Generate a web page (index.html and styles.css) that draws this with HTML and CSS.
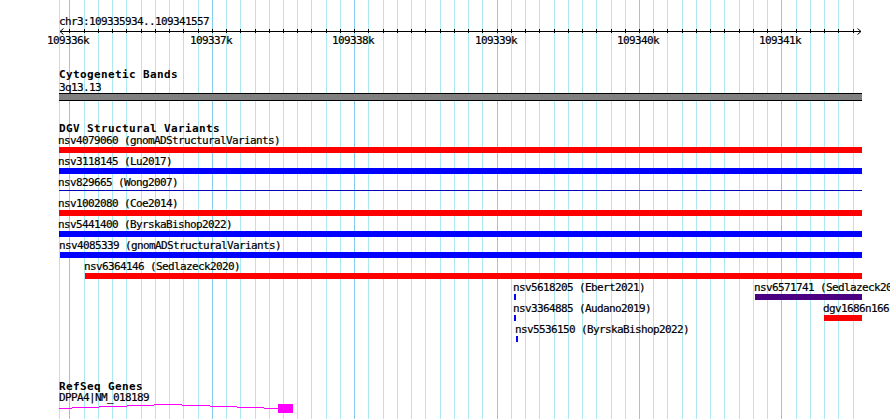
FILE: index.html
```html
<!DOCTYPE html>
<html lang="en">
<head>
    <meta charset="UTF-8">
    <title>chr3:109335934..109341557</title>
    <link rel="stylesheet" href="styles.css">
</head>
<body>
    <div class="browser">
        <div class="grid" id="grid"></div>

        <div class="ruler">
            <div class="ruler-title">chr3:109335934..109341557</div>
            <svg class="axis" id="axis" width="804" height="7">
                <line x1="1" y1="4.5" x2="802" y2="4.5" />
                <polyline points="4.5,1.5 1,4.5 4.5,7.5" />
                <polyline points="798.5,1.5 802,4.5 798.5,7.5" />
            </svg>
            <div class="axis-labels" id="axis-labels"></div>
        </div>

        <section class="track">
            <h2 class="track-title">Cytogenetic Bands</h2>
            <div class="track-label">3q13.13</div>
            <div class="band"></div>
        </section>

        <section class="track">
            <h2 class="track-title">DGV Structural Variants</h2>
            <div class="rows">
                <div class="row">
                    <div class="feature" style="left:0;width:803px">
                        <span class="label">nsv4079060 (gnomADStructuralVariants)</span>
                        <span class="bar red"></span>
                    </div>
                </div>
                <div class="row">
                    <div class="feature" style="left:0;width:803px">
                        <span class="label">nsv3118145 (Lu2017)</span>
                        <span class="bar blue"></span>
                    </div>
                </div>
                <div class="row">
                    <div class="feature" style="left:0;width:803px">
                        <span class="label">nsv829665 (Wong2007)</span>
                        <span class="bar thin"></span>
                    </div>
                </div>
                <div class="row">
                    <div class="feature" style="left:0;width:803px">
                        <span class="label">nsv1002080 (Coe2014)</span>
                        <span class="bar red"></span>
                    </div>
                </div>
                <div class="row">
                    <div class="feature" style="left:0;width:803px">
                        <span class="label">nsv5441400 (ByrskaBishop2022)</span>
                        <span class="bar blue"></span>
                    </div>
                </div>
                <div class="row">
                    <div class="feature" style="left:1px;width:802px">
                        <span class="label">nsv4085339 (gnomADStructuralVariants)</span>
                        <span class="bar blue"></span>
                    </div>
                </div>
                <div class="row">
                    <div class="feature" style="left:26px;width:777px">
                        <span class="label">nsv6364146 (Sedlazeck2020)</span>
                        <span class="bar red"></span>
                    </div>
                </div>
                <div class="row">
                    <div class="feature" style="left:455px;width:2px">
                        <span class="label">nsv5618205 (Ebert2021)</span>
                        <span class="bar blue"></span>
                    </div>
                    <div class="feature" style="left:696px;width:107px">
                        <span class="label">nsv6571741 (Sedlazeck2020)</span>
                        <span class="bar indigo"></span>
                    </div>
                </div>
                <div class="row">
                    <div class="feature" style="left:455px;width:2px">
                        <span class="label">nsv3364885 (Audano2019)</span>
                        <span class="bar blue"></span>
                    </div>
                    <div class="feature" style="left:765px;width:38px">
                        <span class="label">dgv1686n166</span>
                        <span class="bar red"></span>
                    </div>
                </div>
                <div class="row">
                    <div class="feature" style="left:457px;width:2px">
                        <span class="label">nsv5536150 (ByrskaBishop2022)</span>
                        <span class="bar blue"></span>
                    </div>
                </div>
            </div>
        </section>

        <section class="track track-genes">
            <h2 class="track-title">RefSeq Genes</h2>
            <div class="track-label">DPPA4|NM_018189</div>
            <svg class="gene" width="240" height="11">
                <polyline class="intron" points="0,5.5 109,1.5 219,5.5" />
                <rect class="exon" x="219" y="1" width="15" height="9" />
            </svg>
        </section>
    </div>

    <script src="browser.js"></script>
</body>
</html>
```

FILE: styles.css
```css
body {
    margin: 0;
    background: #fff;
    overflow: hidden;
}
.browser {
    position: relative;
    z-index: 0;
    width: 890px;
    height: 419px;
    padding-left: 59px;
    box-sizing: border-box;
    overflow: hidden;
    background: #fff;
    color: #000;
    font-family: "DejaVu Sans Mono", monospace;
    font-size: 11px;
    letter-spacing: -0.62px;
    line-height: 13px;
    -webkit-text-stroke: 0.2px #000;
}
.grid {
    position: absolute;
    inset: 0;
    z-index: -1;
}
.gridline {
    position: absolute;
    top: 0;
    bottom: 0;
    width: 1px;
    background: #ace9f2;
}
.gridline.major {
    background: #86cdee;
}
.ruler-title {
    padding-top: 15px;
    white-space: nowrap;
}
.axis {
    display: block;
    margin-top: -1px;
    overflow: visible;
    shape-rendering: crispEdges;
}
.axis line,
.axis polyline {
    stroke: #000;
    stroke-width: 1;
    fill: none;
}
.axis polyline {
    shape-rendering: auto;
}
.axis-labels {
    position: relative;
    height: 13px;
}
.axis-labels span {
    position: absolute;
    top: 0;
    white-space: nowrap;
}
.track {
    margin-top: 21px;
}
.track-title {
    margin: 0;
    font-size: 11px;
    font-weight: bold;
    letter-spacing: 0.38px;
    line-height: 13px;
    white-space: nowrap;
    -webkit-text-stroke: 0;
}
.track-label {
    white-space: nowrap;
}
.band {
    width: 803px;
    height: 6px;
    margin-top: -1px;
    border-top: 1px solid #000;
    border-bottom: 1px solid #000;
    background: #808080;
}
.rows {
    margin-top: -1px;
}
.row {
    position: relative;
    height: 21px;
}
.feature {
    position: absolute;
    top: 0;
}
.label {
    display: block;
    height: 13px;
    margin-left: -1px;
    white-space: nowrap;
}
.bar {
    display: block;
    height: 6px;
}
.bar.red {
    background: #ff0000;
}
.bar.blue {
    background: #0000ff;
}
.bar.indigo {
    background: #4b0082;
}
.bar.thin {
    height: 1px;
    margin-top: 1px;
    background: #0000c0;
}
.track-genes {
    margin-top: 37px;
}
.track-genes .track-title,
.track-genes .track-label {
    line-height: 11px;
}
.gene {
    display: block;
    shape-rendering: crispEdges;
}
.intron {
    fill: none;
    stroke: #ff00ff;
    stroke-width: 1;
}
.exon {
    fill: #ff00ff;
}
```

FILE: browser.js
```js
// ruler ticks and grid lines, one per 100 bp
var FIRST_TICK = 109336000;
var LAST_TICK = 109341500;
var ORIGIN = 69.4;   // pixel column of FIRST_TICK
var STEP = 14.24;    // pixels per 100 bp
var LEFT = 59;       // left edge of the tracks

var grid = document.getElementById("grid");
var axis = document.getElementById("axis");
var axisLabels = document.getElementById("axis-labels");

function addGridLine(x, major) {
    var line = document.createElement("div");
    line.className = major ? "gridline major" : "gridline";
    line.style.left = x + "px";
    grid.appendChild(line);
}

addGridLine(LEFT, false);

for (var k = 0; FIRST_TICK + k * 100 <= LAST_TICK; k++) {
    var pos = FIRST_TICK + k * 100;
    var x = Math.round(ORIGIN + k * STEP);
    var major = pos % 1000 === 0;

    addGridLine(x, major);

    var tick = document.createElementNS("http://www.w3.org/2000/svg", "line");
    tick.setAttribute("x1", x - LEFT + 0.5);
    tick.setAttribute("x2", x - LEFT + 0.5);
    tick.setAttribute("y1", 2);
    tick.setAttribute("y2", 6);
    axis.appendChild(tick);

    if (major) {
        var label = document.createElement("span");
        label.textContent = (pos / 1000) + "k";
        label.style.left = (x - LEFT - 22) + "px";
        axisLabels.appendChild(label);
    }
}
```
